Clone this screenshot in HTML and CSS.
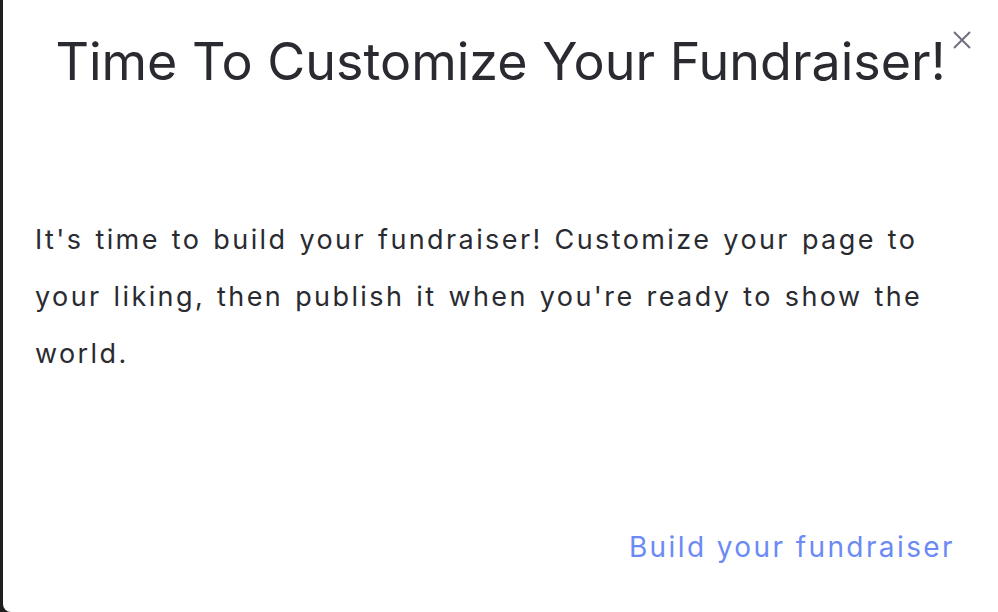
FILE: index.html
```html
<!DOCTYPE html>
<html lang="en">
<head>
    <meta charset="UTF-8">
    <title>Time To Customize Your Fundraiser!</title>
    <link rel="stylesheet" href="styles.css">
</head>
<body>
    <div class="modal">
        <button class="close-btn" aria-label="Close">
            <svg width="20" height="20" viewBox="0 0 20 20">
                <path d="M2 2 L18 18 M18 2 L2 18" stroke="#6e717b" stroke-width="2" fill="none"/>
            </svg>
        </button>
        <h1 class="modal-title">Time To Customize Your Fundraiser!</h1>
        <p class="modal-body">It's time to build your fundraiser! Customize your page to your liking, then publish it when you're ready to show the world.</p>
        <div class="modal-footer">
            <a href="#" class="build-link">Build your fundraiser</a>
        </div>
    </div>
</body>
</html>
```

FILE: styles.css
```css
html, body {
    margin: 0;
    height: 100%;
}
body {
    background-color: #1f1f21;
    font-family: Inter, "Noto Sans", sans-serif;
    overflow: hidden;
}
.modal {
    position: relative;
    box-sizing: border-box;
    margin-left: 3px;
    height: 612px;
    background: white;
    border-bottom-left-radius: 8px;
    display: flex;
    flex-direction: column;
}
.close-btn {
    position: absolute;
    top: 30px;
    left: 949px;
    background: none;
    border: none;
    padding: 0;
    cursor: pointer;
}
.close-btn svg {
    display: block;
}
.modal-title {
    margin: 27px 0 0;
    text-align: center;
    font-size: 52px;
    font-weight: 400;
    color: #2a2b31;
    line-height: 70px;
}
.modal-body {
    margin: 114px 0 0;
    padding: 0 40px 0 32px;
    font-size: 27px;
    line-height: 57px;
    letter-spacing: 2.4px;
    word-spacing: 2px;
    color: #2a2b31;
}
.modal-footer {
    margin-top: auto;
    padding: 0 43px 48px 0;
    text-align: right;
}
.build-link {
    font-size: 28px;
    letter-spacing: 2.4px;
    color: #6b8af6;
    text-decoration: none;
}
```
